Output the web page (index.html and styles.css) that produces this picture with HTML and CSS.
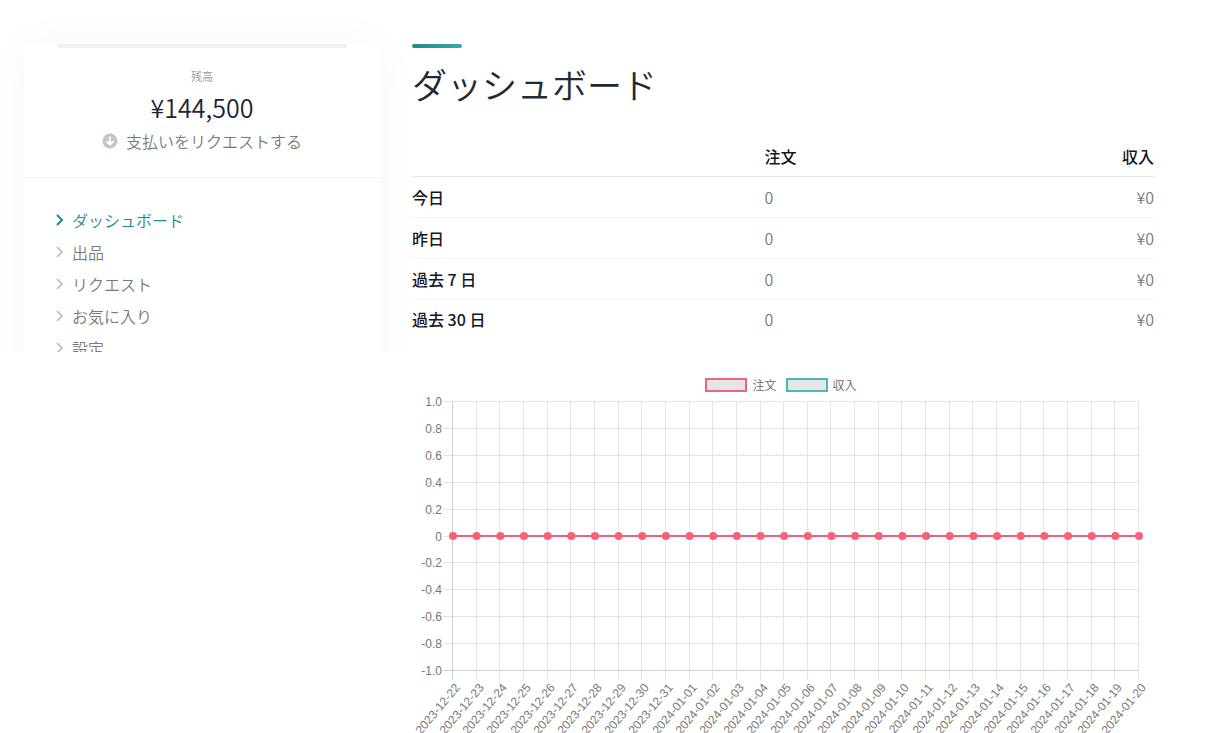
FILE: index.html
```html
<!DOCTYPE html>
<html lang="ja">
<head>
    <meta charset="UTF-8">
    <meta name="viewport" content="width=device-width, initial-scale=1.0">
    <title>ダッシュボード</title>
    <link rel="stylesheet" href="styles.css">
</head>
<body>
<div class="page">
    <aside class="sidebar">
        <div class="card">
            <div class="balance">
                <div class="balance-label">残高</div>
                <div class="balance-amount">¥144,500</div>
                <a class="payout-link" href="#payout">
                    <svg class="payout-icon" viewBox="0 0 16 16" aria-hidden="true">
                        <circle cx="8" cy="8" r="7.5" fill="#bfc4d0"/>
                        <path d="M8 3.5v8M4.5 8.2L8 11.7l3.5-3.5" fill="none" stroke="#fff" stroke-width="2"/>
                    </svg>
                    支払いをリクエストする
                </a>
            </div>
            <nav class="menu">
                <a class="menu-item active" href="#dashboard"><svg class="chevron" viewBox="0 0 8 12" aria-hidden="true"><path d="M1 1l5 5-5 5"/></svg>ダッシュボード</a>
                <a class="menu-item" href="#listings"><svg class="chevron" viewBox="0 0 8 12" aria-hidden="true"><path d="M1 1l5 5-5 5"/></svg>出品</a>
                <a class="menu-item" href="#requests"><svg class="chevron" viewBox="0 0 8 12" aria-hidden="true"><path d="M1 1l5 5-5 5"/></svg>リクエスト</a>
                <a class="menu-item" href="#favorites"><svg class="chevron" viewBox="0 0 8 12" aria-hidden="true"><path d="M1 1l5 5-5 5"/></svg>お気に入り</a>
                <a class="menu-item" href="#settings"><svg class="chevron" viewBox="0 0 8 12" aria-hidden="true"><path d="M1 1l5 5-5 5"/></svg>設定</a>
            </nav>
        </div>
    </aside>

    <main class="content">
        <h1>ダッシュボード</h1>

        <table class="stats">
            <thead>
            <tr>
                <td></td>
                <th scope="col">注文</th>
                <th scope="col">収入</th>
            </tr>
            </thead>
            <tbody>
            <tr>
                <th scope="row">今日</th>
                <td>0</td>
                <td>¥0</td>
            </tr>
            <tr>
                <th scope="row">昨日</th>
                <td>0</td>
                <td>¥0</td>
            </tr>
            <tr>
                <th scope="row">過去 7 日</th>
                <td>0</td>
                <td>¥0</td>
            </tr>
            <tr>
                <th scope="row">過去 30 日</th>
                <td>0</td>
                <td>¥0</td>
            </tr>
            </tbody>
        </table>

        <div class="legend">
            <span class="legend-item"><span class="swatch orders"></span>注文</span>
            <span class="legend-item"><span class="swatch income"></span>収入</span>
        </div>
        <svg class="chart" id="chart"></svg>
    </main>
</div>

<script src="chart.js"></script>
</body>
</html>
```
FILE: styles.css
```css
body {
    margin: 0;
    height: 100vh;
    overflow: hidden;
    background-color: #fff;
    color: #7a7a7a;
    font-family: "Noto Sans CJK JP", sans-serif;
    font-size: 16px;
    font-weight: 350;
    line-height: 24px;
}
a {
    color: inherit;
    text-decoration: none;
}
.page {
    display: grid;
    grid-template-columns: 380px 1fr;
    gap: 32px;
    align-items: start;
    padding-right: 66px;
}

/* Sidebar */
.sidebar {
    box-sizing: border-box;
    max-height: 48vh;
    margin-right: -32px;
    padding: 44px 32px 0 24px;
    overflow: hidden;
}
.card {
    padding-bottom: 32px;
    background-color: #fff;
    box-shadow: 0 0 40px rgba(31, 45, 61, 0.04);
}
.card::before {
    content: "";
    display: block;
    height: 4px;
    margin: 0 32px;
    border-radius: 0 0 4px 4px;
    background-color: #eff1f3;
}
.balance {
    padding: 17px 32px 24px;
    border-bottom: 1px solid #f3f3f3;
    text-align: center;
}
.balance-label {
    color: #999;
    font-size: 11px;
    line-height: 22px;
}
.balance-amount {
    color: #1f2430;
    font-size: 25px;
    line-height: 40px;
}
.payout-link {
    display: flex;
    align-items: center;
    justify-content: center;
    gap: 8px;
    padding-top: 2px;
}
.payout-icon {
    width: 16px;
    height: 16px;
}
.menu {
    padding: 26px 32px 0;
}
.menu-item {
    display: flex;
    align-items: center;
    gap: 8px;
    line-height: 32px;
}
.menu-item.active {
    color: #1d8a8e;
}
.chevron {
    width: 8px;
    height: 12px;
    fill: none;
    stroke: #bfc2cf;
    stroke-width: 2;
}
.active .chevron {
    stroke: #1d8a8e;
}

/* Main column */
.content {
    min-width: 0;
    padding-top: 44px;
}
.content::before {
    content: "";
    display: block;
    width: 50px;
    height: 4px;
    border-radius: 2px;
    background: linear-gradient(to right, #1d8a8e, #3fa9a9);
}
h1 {
    margin: 10px 0 26px;
    color: #222836;
    font-size: 35px;
    font-weight: 350;
    line-height: 52px;
}
.stats {
    width: 100%;
    border-spacing: 0;
    table-layout: fixed;
}
.stats th,
.stats td {
    padding: 8px 0;
    border-bottom: 1px solid #f3f3f3;
    text-align: left;
}
.stats th {
    color: #14171f;
    font-weight: 500;
}
.stats thead th,
.stats thead td {
    border-color: #e6e6e6;
}
.stats tbody tr:last-child > * {
    padding-top: 7px;
    border-bottom: none;
}
.stats tr > :first-child {
    width: 47.5%;
}
.stats tr > :last-child {
    text-align: right;
}

/* Chart */
.legend {
    display: flex;
    justify-content: center;
    gap: 9px;
    margin-top: 38px;
    padding-right: 4px;
    color: #666;
    font-size: 12px;
    line-height: 16px;
}
.legend-item {
    display: flex;
    align-items: center;
    gap: 5px;
}
.swatch {
    width: 38px;
    height: 10px;
    border: 2px solid;
    background-color: #e5e5e5;
}
.swatch.orders {
    border-color: #ee6485;
}
.swatch.income {
    border-color: #4bb9b9;
}
.chart {
    display: block;
    width: 100%;
    height: 352px;
    font-family: "Liberation Sans", Arial, sans-serif;
    font-size: 12px;
    font-weight: 400;
}
.chart text {
    fill: #777;
    text-anchor: end;
}
.grid-line {
    stroke: #e5e5e5;
}
.zero-line {
    stroke: #cfcfcf;
}
.series-line {
    stroke: #ee5f80;
    stroke-width: 2;
}
.point {
    fill: #f7617f;
}
```
FILE: chart.js
```js
const svg = document.getElementById('chart');
const DAYS = 30;
const TOP = 8;
const LEFT = 41;
const HEIGHT = 269;

function add(name, attrs, text) {
    const el = document.createElementNS('http://www.w3.org/2000/svg', name);
    for (const key in attrs) {
        el.setAttribute(key, attrs[key]);
    }
    if (text) {
        el.textContent = text;
    }
    svg.appendChild(el);
}

function line(x1, y1, x2, y2, cls) {
    add('line', {x1: x1, y1: y1, x2: x2, y2: y2, class: cls});
}

function draw() {
    svg.replaceChildren();
    const right = svg.clientWidth - 15;
    const bottom = TOP + HEIGHT;
    const step = (right - LEFT) / (DAYS - 1);
    const snap = v => Math.round(v) + 0.5;

    // Horizontal grid and value labels
    for (let i = 0; i <= 10; i++) {
        const y = snap(TOP + HEIGHT * i / 10);
        const value = (5 - i) / 5;
        line(LEFT - 10, y, right, y, i === 10 ? 'zero-line' : 'grid-line');
        add('text', {x: LEFT - 11, y: y + 4}, value === 0 ? '0' : value.toFixed(1));
    }

    // Vertical grid and dates
    for (let i = 0; i < DAYS; i++) {
        const x = snap(LEFT - 1 + step * i);
        const date = new Date(Date.UTC(2023, 11, 22 + i)).toISOString().slice(0, 10);
        line(x, TOP, x, bottom + 10, i === 0 ? 'zero-line' : 'grid-line');
        add('text', {transform: `translate(${x + 8} ${bottom + 18}) rotate(-50)`}, date);
    }

    // Orders series, flat at zero
    const zero = TOP + HEIGHT / 2 + 0.5;
    line(LEFT, zero, right, zero, 'series-line');
    for (let i = 0; i < DAYS; i++) {
        add('circle', {cx: LEFT + step * i, cy: zero, r: 4, class: 'point'});
    }
}

draw();
window.addEventListener('resize', draw);
```
